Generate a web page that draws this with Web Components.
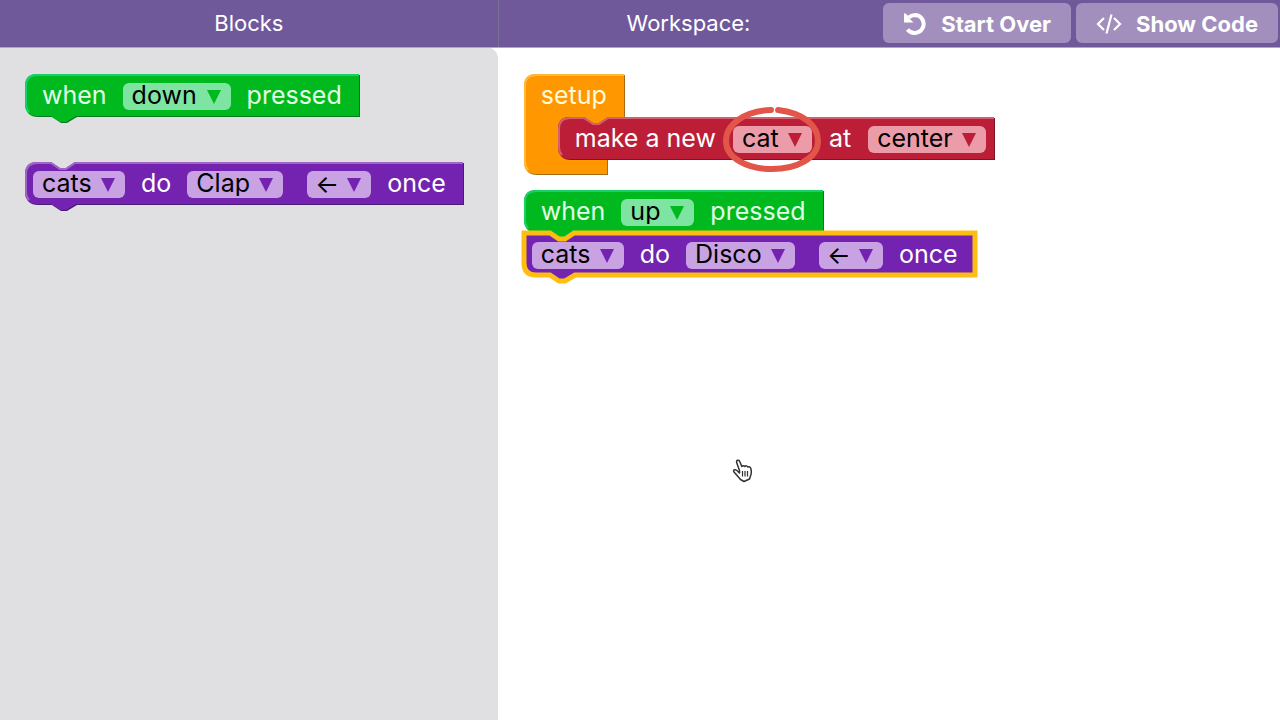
<!DOCTYPE html>
<html lang="en">
<head>
<meta charset="utf-8">
<meta name="viewport" content="width=device-width, initial-scale=1">
<title>Blocks workspace</title>
<style>
  html, body { margin: 0; height: 100%; background: #fff; }
  body { font-family: "Inter", "Liberation Sans", sans-serif; }
</style>
</head>
<body>
<block-editor>
  <editor-heading slot="left-head">Blocks</editor-heading>
  <editor-heading slot="right-head">Workspace:</editor-heading>
  <tool-button slot="tools">
    <svg slot="icon" width="24" height="24" viewBox="0 0 24 24" fill="none" stroke="#fff" stroke-width="4" aria-hidden="true"><path d="M5.500 5.500C8 3.500 10 3 12.500 3A9 9 0 1 1 4.500 17.500"/><path d="M1 1L4 2.500L5.500 5.500L10.500 10.500H1Z" fill="#fff" stroke="none"/></svg>
    Start Over
  </tool-button>
  <tool-button slot="tools">
    <svg slot="icon" width="26" height="24" viewBox="0 0 26 24" fill="none" stroke="#fff" stroke-width="2.200" aria-hidden="true"><path d="M8 6L2 12L8 18M18 6L24 12L18 18M15.500 2.500L10.500 21.500"/></svg>
    Show Code
  </tool-button>

  <block-list slot="blocks" class="palette">
    <code-block kind="event"><span>when</span><block-field label="key" value="down"></block-field><span>pressed</span></code-block>
    <code-block kind="action"><block-field label="group" value="cats"></block-field><span>do</span><block-field label="move" value="Clap"></block-field><block-field class="far" label="direction" value="←"></block-field><span>once</span></code-block>
  </block-list>

  <block-list slot="workspace" class="canvas">
    <setup-block>
      setup
      <code-block slot="body" kind="make"><span>make a new</span><block-field label="sprite" value="cat" circled></block-field><span>at</span><block-field label="place" value="center"></block-field></code-block>
    </setup-block>
    <block-stack>
      <code-block kind="event"><span>when</span><block-field label="key" value="up"></block-field><span>pressed</span></code-block>
      <code-block kind="action" selected><block-field label="group" value="cats"></block-field><span>do</span><block-field label="move" value="Disco"></block-field><block-field class="far" label="direction" value="←"></block-field><span>once</span></code-block>
    </block-stack>
  </block-list>
  <hand-pointer slot="workspace"></hand-pointer>
</block-editor>

<script>
const NS = 'http://www.w3.org/2000/svg';

class Base extends HTMLElement {
  constructor() {
    super();
    this.attachShadow({ mode: 'open' }).innerHTML = this.constructor.html;
  }
}

customElements.define('block-editor', class extends Base {
  static html = `<style>
    :host { display: grid; grid-template: 47px 1fr / 7fr 11fr; min-height: 100vh; }
    header { display: flex; align-items: center; background: #70599b; color: #fff; box-shadow: 0 1px #b3a4cf; z-index: 1; min-width: 0; }
    .right { border-left: 1px solid #78708c; gap: 5px; padding-right: 2px; }
    ::slotted(editor-heading) { flex: 1; }
    aside { background: #e0e0e2; border-top-right-radius: 12px; }
    main { position: relative; min-width: 0; }
  </style>
  <header><slot name="left-head"></slot></header>
  <header class="right"><slot name="right-head"></slot><slot name="tools"></slot></header>
  <aside><slot name="blocks"></slot></aside>
  <main><slot name="workspace"></slot></main>`;
});

customElements.define('editor-heading', class extends Base {
  static html = `<style>
    :host { display: block; text-align: center; font-size: 22px; line-height: 44px; padding-bottom: 2px; }
  </style><slot></slot>`;
});

customElements.define('tool-button', class extends Base {
  static html = `<style>
    :host { display: block; margin-bottom: 2px; }
    button { display: flex; align-items: center; gap: 14px; height: 40px; padding: 2px 20px 0; border: 0; border-radius: 6px;
      background: #a28fbe; color: #fff; font: 700 22px/32px "Inter", "Liberation Sans", sans-serif; white-space: nowrap; }
    ::slotted(svg) { display: block; }
  </style><button type="button"><slot name="icon"></slot><slot></slot></button>`;
});

customElements.define('block-list', class extends Base {
  static html = `<style>
    :host { display: flex; flex-direction: column; align-items: flex-start; gap: 15px; padding: 27px 26px; }
    :host(.palette) { gap: 45px; padding: 27px 25px; }
  </style><slot></slot>`;
});

customElements.define('block-stack', class extends Base {
  static html = `<style>
    :host { display: flex; flex-direction: column; align-items: flex-start; }
  </style><slot></slot>`;
});

customElements.define('block-field', class extends Base {
  static html = `<style>
    :host { display: inline-block; position: relative; }
    select { appearance: none; display: block; box-sizing: border-box; height: 27px; margin: 0; border: 0; border-radius: 6px;
      padding: 0 33px 2px 9px; background: var(--field); color: #000; font: 25px/25px "Inter", "Liberation Sans", sans-serif; }
    select.arrow { padding: 0 32px 0 8px; }
    svg { position: absolute; pointer-events: none; overflow: visible; }
    .tri { right: 10px; top: 7px; fill: var(--fill); }
    .ring { left: 50%; top: 50%; transform: translate(-50%, -50%); fill: none; stroke: #e2564a; stroke-width: 6; z-index: 2; }
  </style>
  <select><option></option></select>
  <svg class="tri" width="14" height="14" viewBox="0 0 14 14" aria-hidden="true"><path d="M0 0H14L7 14Z"/></svg>`;
  connectedCallback() {
    const select = this.shadowRoot.querySelector('select');
    select.setAttribute('aria-label', this.getAttribute('label'));
    select.options[0].textContent = this.getAttribute('value');
    select.classList.toggle('arrow', this.getAttribute('value') === '←');
    if (this.hasAttribute('circled')) {
      const t = document.createElement('template');
      t.innerHTML = `<svg class="ring" width="98" height="66" viewBox="0 0 98 66" aria-hidden="true" stroke-linecap="round">
        <path d="M55 3C80 6 95 18 95 34C95 51 74 62 49 62C24 62 3 51 3 34C3 17 22 4 48 3"/></svg>`;
      this.shadowRoot.append(t.content);
    }
  }
});

/* Layered outline shared by every block: shade, face, bevel light. */
function paint(svg, face, light) {
  svg.replaceChildren();
  for (const [cls, d] of [['shade', face], ['face', face], ['light', light]]) {
    const path = document.createElementNS(NS, 'path');
    path.setAttribute('class', cls);
    path.setAttribute('d', d);
    svg.append(path);
  }
}

const shapeCss = `
  svg { position: absolute; inset: 0; width: 100%; height: 100%; overflow: visible; }
  .shade { fill: var(--shade); transform: translate(1px, 1px); }
  .face { fill: var(--fill); }
  .light { fill: none; stroke: var(--light); stroke-width: 2; }`;

customElements.define('code-block', class extends Base {
  static html = `<style>
    :host { display: block; position: relative; width: max-content; }
    :host([kind=event]) { --fill: #00b91f; --light: #18d068; --shade: #087a20; --field: #7de5a1; color: #e2ffe6; }
    :host([kind=action]) { --fill: #7323b0; --light: #a066c6; --shade: #491c78; --field: #c9a2e4; color: #fff; }
    :host([kind=make]) { --fill: #bb1e36; --light: #d2606f; --shade: #7b1426; --field: #eb9ca8; color: #fff; }
    ${shapeCss}
    :host([selected]) .face { stroke: #fdbd12; stroke-width: 5; }
    :host([selected]) .light { display: none; }
    .row { position: relative; display: flex; align-items: center; gap: 16px; height: 43px; padding: 2px 18px 0 17px; box-sizing: border-box;
      font-size: 25px; line-height: 27px; white-space: nowrap; }
    :host([kind=action]) .row { padding-left: 8px; }
    :host([kind=make]) .row { padding-right: 9px; gap: 17px; }
    ::slotted(span) { padding-bottom: 2px; }
    ::slotted(.far) { margin-left: 8px; }
  </style><svg aria-hidden="true"></svg><div class="row"><slot></slot></div>`;
  connectedCallback() {
    new ResizeObserver(() => this.draw()).observe(this);
    this.draw();
  }
  draw() {
    const w = this.offsetWidth - 1, h = 42;
    const hat = this.getAttribute('kind') === 'event';
    const square = this.hasAttribute('selected');
    const start = square ? 'M0 0' : 'M0 12Q0 0 12 0';
    const notch = hat ? '' : 'H26L35 6H41L50 0';
    const tab = this.getAttribute('kind') === 'make' ? '' : 'H51L41 48H35L26 42';
    const face = `${start}${notch}H${w}V${h}${tab}H12Q0 42 0 30Z`;
    const light = `M4 38Q1 35 1 30V12Q1 1 12 1${hat ? '' : 'H26L35 7H41L50 1'}H${w}`;
    paint(this.shadowRoot.querySelector('svg'), face, light);
  }
});

customElements.define('setup-block', class extends Base {
  static html = `<style>
    :host { display: block; position: relative; width: max-content;
      --fill: #ff9800; --light: #ffb93a; --shade: #a86a14; color: #fffad8; }
    ${shapeCss}
    .head { position: relative; width: max-content; height: 43px; padding: 2px 18px 0 17px; box-sizing: border-box; font-size: 25px; line-height: 39px; }
    .body { position: relative; padding: 0 0 15px 34px; }
  </style><svg aria-hidden="true"></svg><div class="head"><slot></slot></div><div class="body"><slot name="body"></slot></div>`;
  connectedCallback() {
    new ResizeObserver(() => this.draw()).observe(this);
    this.draw();
  }
  draw() {
    const w = this.shadowRoot.querySelector('.head').offsetWidth - 1;
    const h = this.offsetHeight - 1, foot = h - 15;
    const face = `M0 12Q0 0 12 0H${w}V43H85L75 49H69L60 43H46Q34 43 34 55V${foot - 12}Q34 ${foot} 46 ${foot}H83V${h}H12Q0 ${h} 0 ${h - 12}Z`;
    const light = `M4 ${h - 4}Q1 ${h - 7} 1 ${h - 12}V12Q1 1 12 1H${w}`;
    paint(this.shadowRoot.querySelector('svg'), face, light);
  }
});

customElements.define('hand-pointer', class extends Base {
  static html = `<style>
    :host { display: block; position: absolute; left: 234px; top: 412px; }
    svg { display: block; }
  </style><svg width="21" height="24" viewBox="0 0 21 24" fill="#fff" stroke="#333" stroke-width="1.500" stroke-linejoin="round" aria-hidden="true">
    <path d="M7.500 11.500L5 4.500Q4 2 5.500 1.300Q7.300 .8 8 3L9.800 7.500Q11.500 5.800 12.800 7.500Q14.500 6 15.800 8Q18 7 18.800 9.500Q20 13.500 18.500 17L17.500 20L12 22.500L8.500 20.500L5.500 17L2 13Q1 11.500 2.500 10.800Q4 10.300 5.500 12L7.500 14Z"/>
    <path d="M10.500 12V17.500M13 12V17.500M15.500 12V17.500" stroke-width="1.200"/></svg>`;
});
</script>
</body>
</html>
